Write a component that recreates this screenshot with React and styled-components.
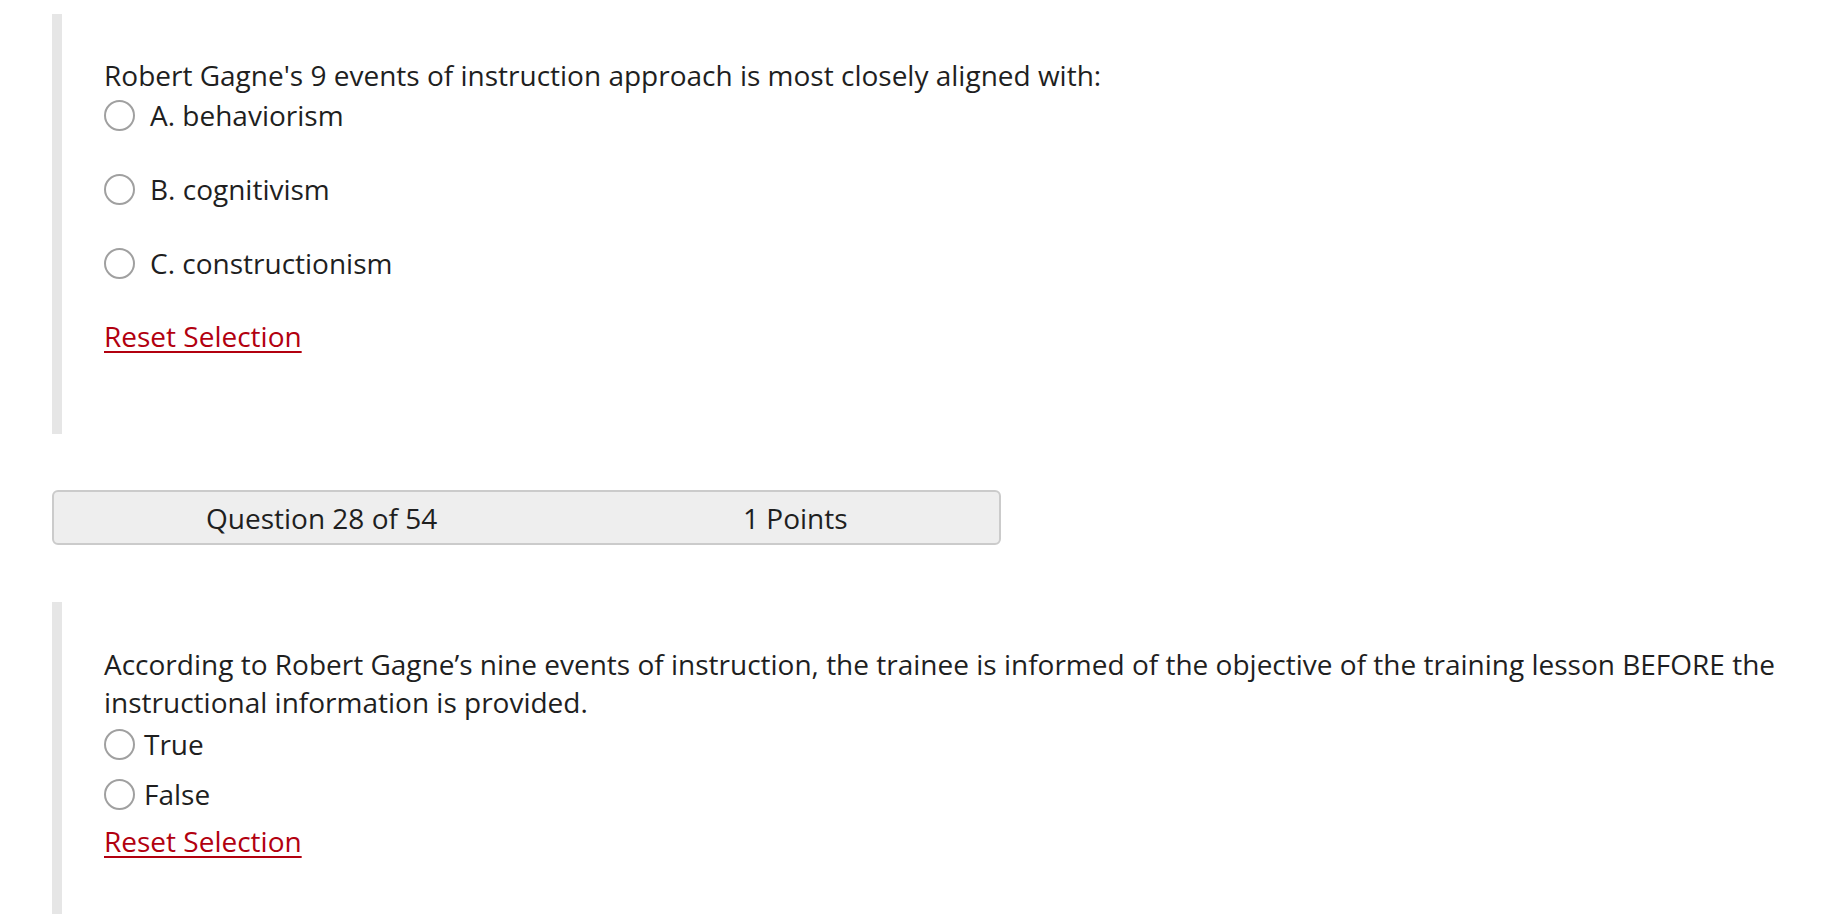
import React from "react";
import styled, { createGlobalStyle } from "styled-components";

const Global = createGlobalStyle`
  html, body { margin: 0; padding: 0; background: #ffffff; }
  body {
    font-family: "Open Sans", "Noto Sans", "Liberation Sans", sans-serif;
    font-size: 28px;
    color: #1f1f1f;
  }
`;

const Page = styled.div`
  padding: 14px 0 0 52px;
  display: flex;
  flex-direction: column;
`;

const QuestionBlock = styled.section`
  border-left: 10px solid #e6e6e6;
  padding: ${(p) => p.$pad};
  min-height: ${(p) => p.$minHeight || "auto"};
  box-sizing: border-box;
  display: flex;
  flex-direction: column;
`;

const Prompt = styled.p`
  margin: 0;
  line-height: 38px;
  max-width: 1720px;
`;

const OptionList = styled.div`
  display: flex;
  flex-direction: column;
  gap: ${(p) => p.$gap}px;
  margin-top: ${(p) => p.$top}px;
`;

const Option = styled.label`
  display: flex;
  align-items: center;
  gap: ${(p) => p.$gap}px;
  line-height: 38px;
  cursor: pointer;
`;

const Radio = styled.span`
  width: 31px;
  height: 31px;
  box-sizing: border-box;
  border: 2px solid #a0a0a0;
  border-radius: 50%;
  background: #ffffff;
  flex: none;
`;

const ResetLink = styled.a`
  align-self: flex-start;
  margin-top: ${(p) => p.$top}px;
  line-height: 38px;
  color: #b2000f;
  text-decoration: underline;
  text-decoration-thickness: 2px;
  text-underline-offset: 4px;
  cursor: pointer;
`;

const HeaderBar = styled.div`
  margin: 56px 0 57px 0;
  width: 949px;
  height: 55px;
  box-sizing: border-box;
  background: #eeeeee;
  border: 2px solid #cbcbcb;
  border-radius: 6px;
  display: grid;
  grid-template-columns: 537px 1fr;
  align-items: center;
  padding-left: 152px;
`;

const HeaderCell = styled.span`
  line-height: 38px;
`;

export default function App() {
  return (
    <>
      <Global />
      <Page>
        <QuestionBlock $pad="42px 0 78px 42px" $minHeight="420px">
          <Prompt>
            Robert Gagne's 9 events of instruction approach is most closely aligned with:
          </Prompt>
          <OptionList $gap={36} $top={2}>
            <Option $gap={15}><Radio />A. behaviorism</Option>
            <Option $gap={15}><Radio />B. cognitivism</Option>
            <Option $gap={15}><Radio />C. constructionism</Option>
          </OptionList>
          <ResetLink $top={35}>Reset Selection</ResetLink>
        </QuestionBlock>

        <HeaderBar>
          <HeaderCell>Question 28 of 54</HeaderCell>
          <HeaderCell>1 Points</HeaderCell>
        </HeaderBar>

        <QuestionBlock $pad="43px 0 80px 42px">
          <Prompt>
            According to Robert Gagne’s nine events of instruction, the trainee is informed of the objective of the training lesson BEFORE the instructional information is provided.
          </Prompt>
          <OptionList $gap={12} $top={4}>
            <Option $gap={9}><Radio />True</Option>
            <Option $gap={9}><Radio />False</Option>
          </OptionList>
          <ResetLink $top={9}>Reset Selection</ResetLink>
        </QuestionBlock>
      </Page>
    </>
  );
}
